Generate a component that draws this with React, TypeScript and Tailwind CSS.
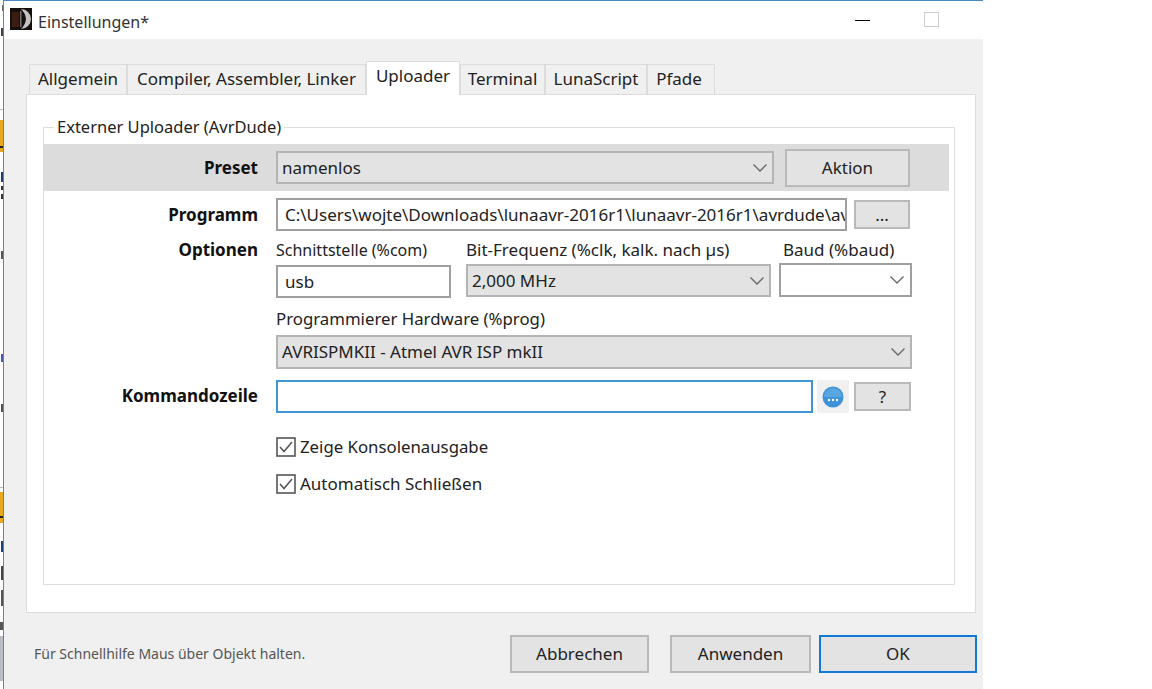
import React from "react";

const Chevron = () => (
  <svg width="16" height="10" viewBox="0 0 16 10" fill="none" className="shrink-0">
    <path d="M1.5 1.5 L8 8 L14.5 1.5" stroke="#666" strokeWidth="1.3" />
  </svg>
);

function Combo({ value, className }: { value?: string; className: string }) {
  return (
    <div className={"flex items-center justify-between pl-[4px] pr-[4px] border-2 border-[#b4b4b4] bg-[#e3e3e3] " + className}>
      <span>{value}</span>
      <Chevron />
    </div>
  );
}

function Btn({ children, className, focused }: { children: React.ReactNode; className: string; focused?: boolean }) {
  return (
    <div className={"flex items-center justify-center border-2 bg-[#e3e3e3] " + (focused ? "border-[#1479d4] " : "border-[#b9b9b9] ") + className}>
      {children}
    </div>
  );
}

const Check = () => (
  <svg width="20" height="20" viewBox="0 0 20 20" fill="none" className="shrink-0">
    <rect x="1" y="1" width="18" height="18" fill="#fff" stroke="#555" strokeWidth="1.6" />
    <path d="M4 10 L8 14.5 L16 5" stroke="#555" strokeWidth="1.5" />
  </svg>
);

function Tab({ label, className }: { label: string; className: string }) {
  return (
    <div className={"h-[30px] pb-[1px] flex items-center justify-center bg-[#f0f0f0] border border-b-0 border-[#dcdcdc] " + className}>
      {label}
    </div>
  );
}

function Label({ children, className }: { children: React.ReactNode; className?: string }) {
  return <div className={"w-[214px] mr-[18px] shrink-0 text-right font-bold text-[#111] " + (className ?? "")}>{children}</div>;
}

function Strip() {
  return (
    <div className="w-[3px] h-[689px] shrink-0 flex flex-col items-end">
      <div className="h-[5px]" />
      <div className="h-[6px] w-[1px] bg-[#666]" />
      <div className="h-[17px]" />
      <div className="h-[8px] w-[2px] bg-[#444]" />
      <div className="h-[73px]" />
      <div className="h-px w-full bg-[#bbb]" />
      <div className="h-[10px]" />
      <div className="h-[26px] w-full bg-[#e8a820]" />
      <div className="h-[2px] w-full bg-[#222]" />
      <div className="h-[4px] w-full bg-[#e8a820]" />
      <div className="h-[20px]" />
      <div className="h-[10px] w-[2px] bg-[#1a3f78]" />
      <div className="h-[4px]" />
      <div className="h-[4px] w-[2px] bg-[#333]" />
      <div className="h-[4px]" />
      <div className="h-[5px] w-[2px] bg-[#333]" />
      <div className="h-[52px]" />
      <div className="h-[8px] w-[2px] bg-[#555]" />
      <div className="h-[95px]" />
      <div className="h-[8px] w-[2px] bg-[#4a5ab0]" />
      <div className="h-[42px]" />
      <div className="h-[8px] w-[2px] bg-[#555]" />
      <div className="h-[75px]" />
      <div className="h-px w-full bg-[#bbb]" />
      <div className="h-[4px]" />
      <div className="h-[24px] w-full bg-[#e8a820]" />
      <div className="h-[2px] w-full bg-[#222]" />
      <div className="h-[5px] w-full bg-[#e8a820]" />
      <div className="h-[18px]" />
      <div className="h-[11px] w-[2px] bg-[#1a3f78]" />
      <div className="h-[14px]" />
      <div className="h-[14px] w-[2px] bg-[#444]" />
      <div className="h-[10px]" />
      <div className="h-[16px] w-[2px] bg-[#555]" />
      <div className="h-[16px]" />
      <div className="h-[8px] w-full bg-[#555]" />
      <div className="h-[6px]" />
      <div className="h-[45px] w-full bg-[#b9bec4]" />
    </div>
  );
}

export default function App() {
  return (
    <div className="w-[1152px] h-[689px] overflow-hidden bg-white flex text-[17px] leading-[22px] text-[#222] font-['Noto_Sans','Open_Sans',sans-serif]">
      <Strip />
      <div className="w-[980px] h-[689px] shrink-0 border-l border-t border-[#4a8cc8] flex flex-col">
        {/* Title bar */}
        <div className="h-[38px] shrink-0 bg-white flex items-center pl-[6px]">
          <svg width="22" height="22" viewBox="0 0 22 22" className="shrink-0 mt-[-2px]">
            <rect width="22" height="22" fill="#15100e" />
            <rect x="2" y="4" width="7" height="15" fill="#3a1c10" />
            <path d="M11 1 A10 10 0 0 1 11 21 A16 16 0 0 0 16 11 A16 16 0 0 0 11 1 Z" fill="#c4c4c0" />
            <rect x="10" y="3" width="1.5" height="16" fill="#777" />
          </svg>
          <div className="ml-[6px] mt-[3px] text-[16px] text-[#333]">Einstellungen*</div>
          <div className="ml-auto w-[15px] h-px bg-black mr-[54px]" />
          <div className="w-[15px] h-[15px] mt-[-2px] border border-[#ccc] mr-[44px]" />
        </div>

        {/* Body */}
        <div className="flex-1 bg-[#f0f0f0] flex flex-col">
          <div className="pt-[22px] pl-[22px]">
            {/* Tabs */}
            <div className="h-[33px] flex items-end pl-[3px]">
              <Tab label="Allgemein" className="w-[98px]" />
              <Tab label="Compiler, Assembler, Linker" className="w-[239px]" />
              <div className="h-[34px] w-[94px] mb-[-1px] relative flex items-start justify-center pt-[3px] bg-white border border-b-0 border-[#dcdcdc]">Uploader</div>
              <Tab label="Terminal" className="w-[85px]" />
              <Tab label="LunaScript" className="w-[102px]" />
              <Tab label="Pfade" className="w-[68px] pr-[4px]" />
            </div>
            {/* Panel */}
            <div className="w-[950px] h-[519px] bg-white border border-[#dcdcdc] pt-[21px] pl-[17px]">
              <fieldset className="w-[912px] h-[469px] ml-[-1px] border border-[#dcdcdc]">
                <legend className="ml-[10px] px-[3px] text-[16.5px]">Externer Uploader (AvrDude)</legend>
                {/* Preset */}
                <div className="mt-[6px] mr-[5px] h-[47px] bg-[#dcdcdc] flex items-center">
                  <Label>Preset</Label>
                  <Combo value="namenlos" className="w-[498px] h-[33px]" />
                  <Btn className="ml-[11px] w-[125px] h-[38px]">Aktion</Btn>
                </div>
                {/* Programm */}
                <div className="mt-[7px] flex items-center h-[33px]">
                  <Label>Programm</Label>
                  <div className="w-[571px] h-[33px] border-2 border-[#a0a0a0] bg-white pl-[7px] flex items-center overflow-hidden whitespace-nowrap">
                    C:\Users\wojte\Downloads\lunaavr-2016r1\lunaavr-2016r1\avrdude\av
                  </div>
                  <Btn className="ml-[7px] w-[56px] h-[29px]">...</Btn>
                </div>
                {/* Optionen */}
                <div className="mt-[8px] flex">
                  <Label>Optionen</Label>
                  <div className="flex flex-col">
                    <div className="flex">
                      <div className="w-[190px]">
                        <div className="text-[16px]">Schnittstelle (%com)</div>
                        <div className="mt-[4px] w-[175px] h-[33px] border-2 border-[#a0a0a0] bg-white pl-[7px] flex items-center">usb</div>
                      </div>
                      <div className="w-[313px]">
                        <div>Bit-Frequenz (%clk, kalk. nach µs)</div>
                        <Combo value="2,000 MHz" className="mt-[3px] w-[305px] h-[33px]" />
                      </div>
                      <div>
                        <div className="ml-[4px]">Baud (%baud)</div>
                        <div className="mt-[2px] w-[133px] h-[34px] border-2 border-[#a0a0a0] bg-white flex items-center justify-end pr-[5px]">
                          <Chevron />
                        </div>
                      </div>
                    </div>
                    <div className="mt-[10px] text-[16.8px]">Programmierer Hardware (%prog)</div>
                    <Combo value="AVRISPMKII - Atmel AVR ISP mkII" className="mt-[5px] w-[636px] h-[34px]" />
                  </div>
                </div>
                {/* Kommandozeile */}
                <div className="mt-[11px] flex items-center h-[33px]">
                  <Label className="mt-[-2px]">Kommandozeile</Label>
                  <div className="w-[537px] h-[33px] border-2 border-[#3f95d6] bg-white" />
                  <div className="ml-[4px] w-[32px] h-[33px] bg-[#f0f0f0] flex items-center justify-center">
                    <svg width="22" height="22" viewBox="0 0 22 22">
                      <circle cx="11" cy="11" r="10.5" fill="#3d92d8" />
                      <path d="M2 11 A9 9 0 0 1 20 11 Z" fill="#5aa6e2" />
                      <circle cx="7" cy="14" r="1.2" fill="#fff" />
                      <circle cx="11" cy="14" r="1.2" fill="#fff" />
                      <circle cx="15" cy="14" r="1.2" fill="#fff" />
                    </svg>
                  </div>
                  <Btn className="ml-[5px] w-[57px] h-[29px]">?</Btn>
                </div>
                {/* Checkboxes */}
                <div className="mt-[24px] ml-[232px] flex items-center gap-[4px] h-[20px]">
                  <Check />
                  <span className="text-[16.8px]">Zeige Konsolenausgabe</span>
                </div>
                <div className="mt-[17px] ml-[232px] flex items-center gap-[4px] h-[20px]">
                  <Check />
                  <span>Automatisch Schließen</span>
                </div>
              </fieldset>
            </div>
          </div>
          {/* Footer */}
          <div className="mt-[22px] flex items-center pl-[30px]">
            <div className="text-[14px] text-[#555] w-[476px]">Für Schnellhilfe Maus über Objekt halten.</div>
            <Btn className="w-[139px] h-[38px]">Abbrechen</Btn>
            <Btn className="ml-[21px] w-[141px] h-[38px]">Anwenden</Btn>
            <Btn focused className="ml-[8px] w-[158px] h-[38px]">OK</Btn>
          </div>
        </div>
      </div>
    </div>
  );
}
